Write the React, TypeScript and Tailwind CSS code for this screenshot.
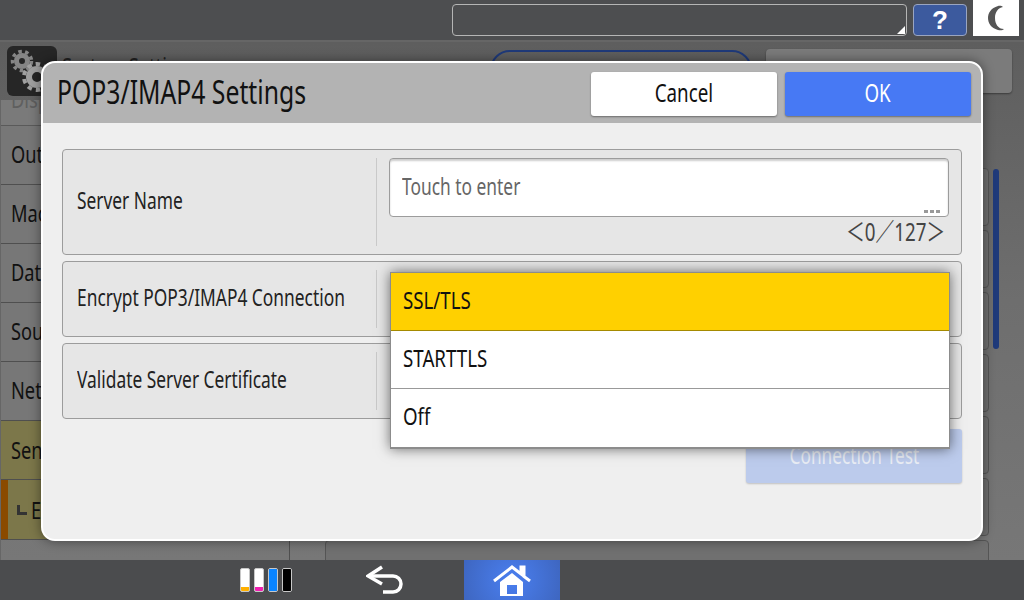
const sideRows = ['Out', 'Mac', 'Dat', 'Sou', 'Net']
const listRows = [1, 2, 3, 4, 5, 6, 7]

function GearIcon() {
  return (
    <svg viewBox="0 0 50 50" className="w-[50px] h-[50px] shrink-0">
      <rect width="50" height="50" rx="6" fill="#262626" />
      <g fill="none" stroke="#858585">
        <circle cx="15" cy="15" r="5.500" strokeWidth="5" />
        <circle cx="15" cy="15" r="9.500" strokeWidth="3.500" strokeDasharray="3.500 3.300" />
      </g>
      <g fill="none" stroke="#a0a0a0">
        <circle cx="30" cy="31" r="8" strokeWidth="6" />
        <circle cx="30" cy="31" r="13" strokeWidth="4" strokeDasharray="4.500 4" />
      </g>
    </svg>
  )
}

function InkBar({ fill, level }: { fill: string; level: string }) {
  return (
    <div className="w-[10px] h-[24px] rounded-[2px] border border-[#c8c8c8] bg-white overflow-hidden flex flex-col justify-end">
      <div className={`${fill} ${level} w-full`} />
    </div>
  )
}

function Row({ label, height, children }: { label: string; height: string; children?: React.ReactNode }) {
  return (
    <div className={`${height} flex items-stretch rounded-[4px] border border-[#9c9c9c] bg-[#e6e6e6]`}>
      <div className="w-[314px] py-2 shrink-0">
        <div className="h-full border-r border-[#c9c9c9] flex items-center pl-[14px] pb-1 text-[23px] leading-none text-[#222]">
          <span className="inline-block origin-left scale-x-[0.755] whitespace-nowrap">{label}</span>
        </div>
      </div>
      {children}
    </div>
  )
}

function Option({ label, cls }: { label: string; cls: string }) {
  return (
    <div className={`h-[58px] flex items-center pl-3 pb-1 text-[24px] text-[#111] ${cls}`}>
      <span className="inline-block origin-left scale-x-[0.78]">{label}</span>
    </div>
  )
}

export default function App() {
  return (
    <div className="relative w-[1024px] h-[600px] overflow-hidden bg-[#6f6f6f] font-['Noto_Sans',sans-serif]">
      {/* top bar */}
      <div className="h-[42px] bg-[#4d4e50] border-b-2 border-[#666] flex items-start justify-end gap-[6px] pt-1 pr-[5px]">
        <div className="relative w-[455px] h-[32px] rounded-[4px] border border-[#b5b5b5]">
          <div className="absolute right-[1px] bottom-[1px] w-0 h-0 border-l-[8px] border-l-transparent border-b-[8px] border-b-white" />
        </div>
        <div className="w-[54px] h-[32px] rounded-[4px] border border-[#9aa5c0] bg-[#3c5a9e] flex items-center justify-center text-white text-[26px] font-['Liberation_Sans',sans-serif] font-bold">?</div>
        <div className="w-[46px] h-[36px] -mt-1 bg-white flex items-center justify-center">
          <svg viewBox="0 0 18 26" className="w-[18px] h-[26px]">
            <path d="M11 1C4 3 1 8 1 13s3 10 10 12c3 .6 5 0 6-1-6 0-9-5-9-11s3-10 8-11c-1-1-3-1.500-5-1z" fill="#555" />
          </svg>
        </div>
      </div>

      {/* page behind the dialog */}
      <div className="relative h-[518px] bg-gradient-to-b from-[#5e5e5e] via-[#6e6e6e] to-[#777]">
        <div className="relative h-[58px] flex items-start pl-[7px] pt-1 gap-[5px]">
          <GearIcon />
          <span className="inline-block origin-left scale-x-[0.76] text-[24px] leading-[32px] mt-[4px] text-[#222] whitespace-nowrap">System Settings</span>
          <div className="absolute left-[490px] top-[8px] w-[262px] h-[40px] rounded-[20px] border-2 border-[#1f3a7a]" />
          <div className="absolute left-[766px] top-[7px] w-[246px] h-[44px] rounded-[4px] bg-[#7b7b7b] shadow-[0_1px_2px_rgba(0,0,0,0.4)]" />
        </div>

        <div className="flex items-start">
          <div className="w-[290px] h-[460px] border-r border-[#4f4f4f] flex flex-col border-l border-l-[#666]">
            <div className="h-[26px] overflow-hidden flex items-start pl-[10px] border-b border-[#5a5a5a] bg-[#7a7a7a] text-[24px] leading-[24px] text-[#5f5f5f]">
              <span className="inline-block origin-left scale-x-[0.76] -mt-[13px]">Disp</span>
            </div>
            {sideRows.map((s) => (
              <div key={s} className="h-[59px] flex items-center pl-[10px] pb-[2px] border-b border-[#4f4f4f] text-[24px] text-[#111] bg-[#777]">
                <span className="inline-block origin-left scale-x-[0.76]">{s}</span>
              </div>
            ))}
            <div className="h-[59px] flex items-center pl-[10px] border-b border-[#4f4f4f] text-[24px] text-[#111] bg-[#7c774a]">
              <span className="inline-block origin-left scale-x-[0.76]">Sen</span>
            </div>
            <div className="h-[60px] flex items-center bg-[#7c774a] border-b border-[#4f4f4f] text-[24px] text-[#111]">
              <div className="w-[7px] h-full bg-[#8a4a00]" />
              <div className="ml-[9px] mr-1 w-[10px] h-[10px] border-l-[3px] border-b-[3px] border-[#333]" />
              <span className="inline-block origin-left scale-x-[0.76]">E</span>
            </div>
          </div>

          {/* list behind the dialog */}
          <div className="ml-[35px] w-[664px] mt-[68px] flex flex-col gap-1">
            {listRows.map((n) => (
              <div key={n} className="h-[58px] shrink-0 rounded-[4px] border border-[#555] bg-[#707070]" />
            ))}
          </div>
          <div className="ml-1 mt-[69px] w-[6px] h-[180px] rounded-[3px] bg-[#1f3a7a]" />
        </div>
      </div>

      {/* bottom bar */}
      <div className="absolute left-0 bottom-0 w-full h-[40px] bg-[#4b4c4e] flex items-stretch">
        <div className="ml-[240px] flex items-center gap-1">
          <InkBar fill="bg-[#ffb000]" level="h-[4px]" />
          <InkBar fill="bg-[#f01fb0]" level="h-[4px]" />
          <InkBar fill="bg-[#0a84ff]" level="h-full" />
          <InkBar fill="bg-black" level="h-full" />
        </div>
        <div className="ml-[74px] w-[38px] flex items-center justify-center">
          <svg viewBox="0 0 38 30" className="w-[38px] h-[30px]" fill="none" stroke="#fff" strokeWidth="3.5">
            <path d="M16 2 2 11l14 8" />
            <path d="M2 11h25a8 8 0 0 1 0 16H17" />
          </svg>
        </div>
        <div className="ml-[60px] w-[96px] bg-[radial-gradient(circle,#4a7ff0,#3e66c0)] flex items-center justify-center">
          <svg viewBox="0 0 40 32" className="w-[40px] h-[32px]">
            <path d="M2 17 20 3l9 7V3h3v9.500L38 17" fill="none" stroke="#fff" strokeWidth="3" />
            <path fillRule="evenodd" d="M8 18 20 9l11 9v14H8zM15 21v9h10v-9z" fill="#fff" />
          </svg>
        </div>
      </div>

      {/* dialog */}
      <div className="absolute left-[41px] top-[61px] w-[942px] h-[480px] rounded-[14px] border-2 border-white bg-[#efefef] overflow-hidden flex flex-col shadow-[0_0_12px_rgba(0,0,0,0.45)]">
        <div className="h-[60px] bg-[#b3b3b3] flex items-center justify-between pl-[14px] pr-[10px] shrink-0">
          <span className="inline-block origin-left scale-x-[0.75] text-[33px] pb-[2px] text-[#111] whitespace-nowrap">POP3/IMAP4 Settings</span>
          <div className="flex gap-2 mt-[2px]">
            <div className="w-[186px] h-[44px] pb-[3px] rounded-[3px] bg-white shadow-[0_1px_2px_rgba(0,0,0,0.4)] flex items-center justify-center text-[25px] text-[#111]">
              <span className="inline-block scale-x-[0.75]">Cancel</span>
            </div>
            <div className="w-[186px] h-[44px] pb-[3px] rounded-[3px] bg-[#4779f4] shadow-[0_1px_2px_rgba(0,0,0,0.4)] flex items-center justify-center text-[25px] text-white">
              <span className="inline-block scale-x-[0.75]">OK</span>
            </div>
          </div>
        </div>
        <div className="flex flex-col gap-[6px] pt-[26px] px-[19px]">
          <Row label="Server Name" height="h-[106px]">
            <div className="flex-1 pl-3 pr-3 pt-2">
              <div className="relative h-[59px] rounded-[4px] border border-[#9c9c9c] bg-white shadow-[inset_0_2px_2px_rgba(0,0,0,0.2)] flex items-center pl-3 pb-[3px] text-[23px] text-[#666]">
                <span className="inline-block origin-left scale-x-[0.755]">Touch to enter</span>
                <div className="absolute right-2 bottom-[3px] flex gap-[2px]">
                  <div className="w-[4px] h-[3px] bg-[#999]" />
                  <div className="w-[4px] h-[3px] bg-[#999]" />
                  <div className="w-[4px] h-[3px] bg-[#999]" />
                </div>
              </div>
              <div className="text-right pr-1 text-[25px] leading-[29px] text-[#444] font-['Noto_Sans','Noto_Sans_CJK_JP',sans-serif]">
                <span className="inline-block origin-right scale-x-[0.75]">＜0／127＞</span>
              </div>
            </div>
          </Row>
          <Row label="Encrypt POP3/IMAP4 Connection" height="h-[76px]" />
          <Row label="Validate Server Certificate" height="h-[76px]" />
        </div>
        <div className="flex justify-end px-[19px] pt-[10px]">
          <div className="w-[216px] h-[54px] pb-[2px] rounded-[3px] bg-[#bccbec] shadow-[0_1px_2px_rgba(0,0,0,0.2)] flex items-center justify-center text-[23px] text-[#e9edf4]">
            <span className="inline-block scale-x-[0.75]">Connection Test</span>
          </div>
        </div>
      </div>

      {/* open dropdown */}
      <div className="absolute left-[390px] top-[272px] w-[560px] border border-[#8c8c8c] border-b-2 bg-white shadow-[0_0_12px_rgba(0,0,0,0.55)]">
        <Option label="SSL/TLS" cls="bg-[#ffd000] border-b border-[#a58a00]" />
        <Option label="STARTTLS" cls="border-b border-[#999]" />
        <Option label="Off" cls="" />
      </div>
    </div>
  )
}
